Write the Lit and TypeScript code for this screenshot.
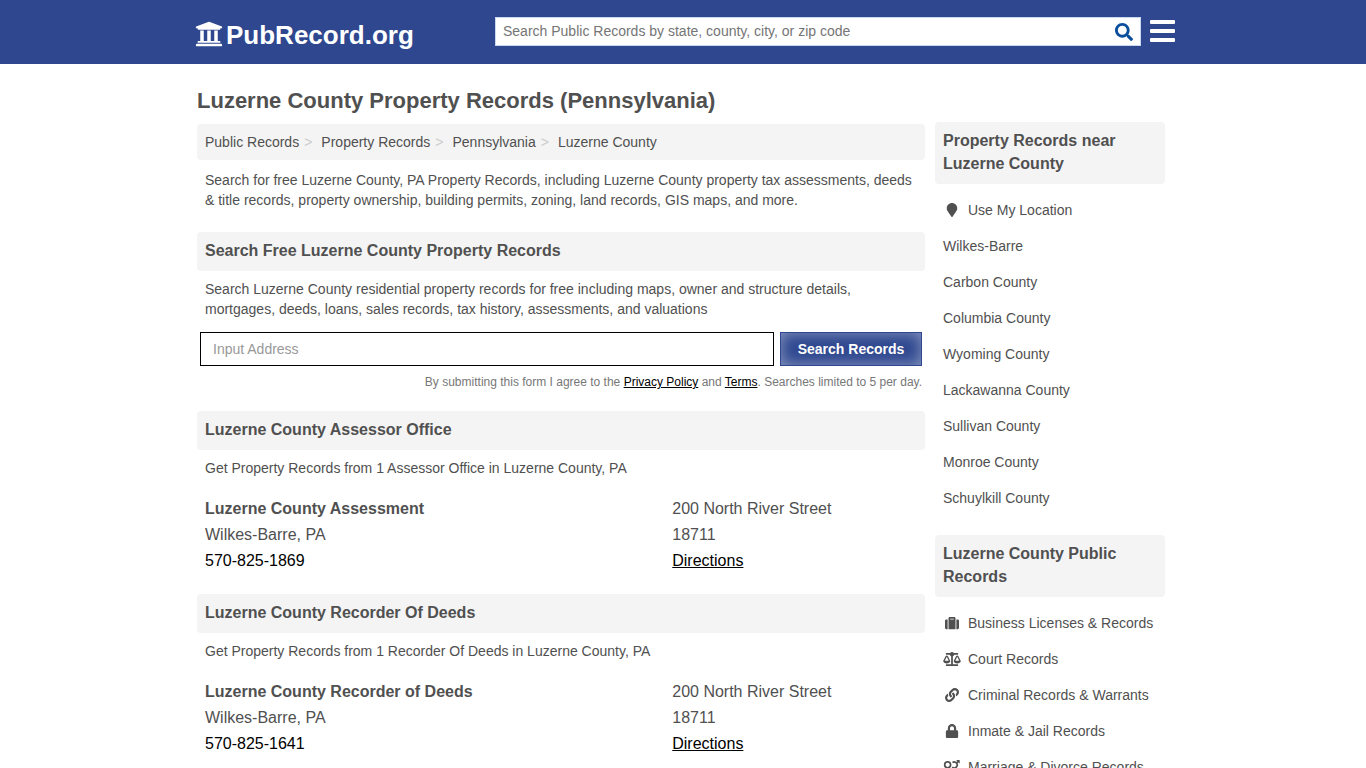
import { LitElement, html, css, svg } from "lit";
import { customElement } from "lit/decorators.js";

const ICONS: Record<string, { box: string; body: unknown }> = {
  university: {
    box: "0 0 512 512",
    body: svg`<path d="M496 128v16a8 8 0 0 1-8 8h-24v12c0 6.627-5.373 12-12 12H60c-6.627 0-12-5.373-12-12v-12H24a8 8 0 0 1-8-8v-16a8 8 0 0 1 4.941-7.392l232-88a7.996 7.996 0 0 1 6.118 0l232 88A8 8 0 0 1 496 128zm-24 304H40c-13.255 0-24 10.745-24 24v16a8 8 0 0 0 8 8h464a8 8 0 0 0 8-8v-16c0-13.255-10.745-24-24-24zM96 192v192H60c-6.627 0-12 5.373-12 12v20h416v-20c0-6.627-5.373-12-12-12h-36V192h-64v192h-64V192h-64v192h-64V192H96z"/>`,
  },
  search: {
    box: "0 0 512 512",
    body: svg`<path d="M505 442.7L405.3 343c-4.5-4.5-10.6-7-17-7H372c27.6-35.3 44-79.7 44-128C416 93.1 322.9 0 208 0S0 93.1 0 208s93.1 208 208 208c48.3 0 92.7-16.4 128-44v16.3c0 6.4 2.5 12.5 7 17l99.7 99.7c9.4 9.4 24.6 9.4 33.9 0l28.3-28.3c9.4-9.4 9.4-24.6.1-34zM208 336c-70.7 0-128-57.2-128-128 0-70.7 57.2-128 128-128 70.7 0 128 57.2 128 128 0 70.7-57.2 128-128 128z"/>`,
  },
  marker: {
    box: "0 0 384 512",
    body: svg`<path d="M172.268 501.67C26.97 291.031 0 269.413 0 192 0 85.961 85.961 0 192 0s192 85.961 192 192c0 77.413-26.97 99.031-172.268 309.67-9.535 13.774-29.93 13.773-39.464 0z"/>`,
  },
  suitcase: {
    box: "0 0 512 512",
    body: svg`<path d="M128 480h256V80c0-26.5-21.5-48-48-48H176c-26.5 0-48 21.5-48 48v400zm64-384h128v32H192V96zm320 80v256c0 26.5-21.5 48-48 48h-48V128h48c26.5 0 48 21.5 48 48zM96 480H48c-26.5 0-48-21.5-48-48V176c0-26.5 21.5-48 48-48h48v352z"/>`,
  },
  scale: {
    box: "0 0 640 512",
    body: svg`<path d="M256 336h-.02c0-16.18 1.34-8.73-85.05-181.51-17.65-35.29-68.19-35.36-85.87 0C-2.06 328.75.02 320.33.02 336H0c0 44.18 57.31 80 128 80s128-35.82 128-80zM128 176l72 144H56l72-144zm511.98 160c0-16.18 1.34-8.73-85.05-181.51-17.65-35.29-68.19-35.36-85.87 0-87.12 174.26-85.04 165.84-85.04 181.51H384c0 44.18 57.31 80 128 80s128-35.82 128-80h-.02zM440 320l72-144 72 144H440zm88 128H352V153.25c23.51-10.29 41.16-31.48 46.39-57.25H528c8.84 0 16-7.16 16-16V48c0-8.84-7.16-16-16-16H383.64C369.04 12.68 346.09 0 320 0s-49.04 12.68-63.64 32H112c-8.84 0-16 7.16-16 16v32c0 8.84 7.16 16 16 16h129.61c5.23 25.76 22.87 46.96 46.39 57.25V448H112c-8.84 0-16 7.16-16 16v32c0 8.84 7.16 16 16 16h416c8.84 0 16-7.16 16-16v-32c0-8.84-7.16-16-16-16z"/>`,
  },
  link: {
    box: "0 0 512 512",
    body: svg`<path d="M326.612 185.391c59.747 59.809 58.927 155.698.36 214.59-.11.12-.24.25-.36.37l-67.2 67.2c-59.27 59.27-155.699 59.262-214.96 0-59.27-59.26-59.27-155.7 0-214.96l37.106-37.106c9.84-9.84 26.786-3.3 27.294 10.606.648 17.722 3.826 35.527 9.69 52.721 1.986 5.822.567 12.262-3.783 16.612l-13.087 13.087c-28.026 28.026-28.905 73.66-1.155 101.96 28.024 28.579 74.086 28.749 102.325.51l67.2-67.19c28.191-28.191 28.073-73.757 0-101.83-3.701-3.694-7.429-6.564-10.341-8.569a16.037 16.037 0 0 1-6.947-12.606c-.396-10.567 3.348-21.456 11.698-29.806l21.054-21.055c5.521-5.521 14.182-6.199 20.584-1.731a152.482 152.482 0 0 1 20.522 17.197zM467.547 44.449c-59.261-59.262-155.69-59.27-214.96 0l-67.2 67.2c-.12.12-.25.25-.36.37-58.566 58.892-59.387 154.781.36 214.59a152.454 152.454 0 0 0 20.521 17.196c6.402 4.468 15.064 3.789 20.584-1.731l21.054-21.055c8.35-8.35 12.094-19.239 11.698-29.806a16.037 16.037 0 0 0-6.947-12.606c-2.912-2.005-6.64-4.875-10.341-8.569-28.073-28.073-28.191-73.639 0-101.83l67.2-67.19c28.239-28.239 74.3-28.069 102.325.51 27.75 28.3 26.872 73.934-1.155 101.96l-13.087 13.087c-4.35 4.35-5.769 10.79-3.783 16.612 5.864 17.194 9.042 34.999 9.69 52.721.509 13.906 17.454 20.446 27.294 10.606l37.106-37.106c59.271-59.259 59.271-155.699.001-214.959z"/>`,
  },
  lock: {
    box: "0 0 448 512",
    body: svg`<path d="M400 224h-24v-72C376 68.2 307.8 0 224 0S72 68.2 72 152v72H48c-26.5 0-48 21.5-48 48v192c0 26.5 21.5 48 48 48h352c26.5 0 48-21.5 48-48V272c0-26.5-21.5-48-48-48zm-104 0H152v-72c0-39.7 32.3-72 72-72s72 32.3 72 72v72z"/>`,
  },
  couple: {
    box: "0 0 640 512",
    body: svg`<g fill="none" stroke="currentColor" stroke-width="62"><circle cx="160" cy="176" r="108"/><path d="M160 284V500M84 400H236"/><path d="M338 92A108 108 0 1 1 330 262M484 118L560 42"/></g><path fill="currentColor" d="M474 0H588a12 12 0 0 1 12 12V126L560 100L500 40Z"/>`,
  },
};

const icon = (name: string, cls: string) =>
  html`<svg class=${cls} viewBox=${ICONS[name].box} fill="currentColor" aria-hidden="true">${ICONS[name].body}</svg>`;

interface SideLink {
  label: string;
  icon?: string;
}

const NEARBY: SideLink[] = [
  { label: "Use My Location", icon: "marker" },
  { label: "Wilkes-Barre" },
  { label: "Carbon County" },
  { label: "Columbia County" },
  { label: "Wyoming County" },
  { label: "Lackawanna County" },
  { label: "Sullivan County" },
  { label: "Monroe County" },
  { label: "Schuylkill County" },
];

const RECORDS: SideLink[] = [
  { label: "Business Licenses & Records", icon: "suitcase" },
  { label: "Court Records", icon: "scale" },
  { label: "Criminal Records & Warrants", icon: "link" },
  { label: "Inmate & Jail Records", icon: "lock" },
  { label: "Marriage & Divorce Records", icon: "couple" },
];

const CRUMBS = ["Public Records", "Property Records", "Pennsylvania", "Luzerne County"];

const OFFICES = [
  {
    heading: "Luzerne County Assessor Office",
    intro: "Get Property Records from 1 Assessor Office in Luzerne County, PA",
    name: "Luzerne County Assessment",
    city: "Wilkes-Barre, PA",
    phone: "570-825-1869",
    street: "200 North River Street",
    zip: "18711",
  },
  {
    heading: "Luzerne County Recorder Of Deeds",
    intro: "Get Property Records from 1 Recorder Of Deeds in Luzerne County, PA",
    name: "Luzerne County Recorder of Deeds",
    city: "Wilkes-Barre, PA",
    phone: "570-825-1641",
    street: "200 North River Street",
    zip: "18711",
  },
];

@customElement("app-root")
export class AppRoot extends LitElement {
  static styles = css`
    :host {
      display: block;
      background: #fff;
      color: #505050;
      font: 14px/20px "Liberation Sans", Arial, sans-serif;
    }
    *,
    *::before {
      box-sizing: border-box;
    }
    h1,
    h2,
    p,
    ul,
    ol {
      margin: 0;
      padding: 0;
    }
    ul,
    ol {
      list-style: none;
    }
    a {
      color: inherit;
      text-decoration: none;
    }
    input,
    button {
      font: inherit;
      margin: 0;
      border-radius: 0;
    }
    .header {
      background: #2e478f;
    }
    .bar {
      display: flex;
      align-items: center;
      max-width: 984px;
      height: 64px;
      margin: 0 auto;
      padding: 0 0 2px 4px;
    }
    .logo {
      display: flex;
      align-items: center;
      gap: 3px;
      width: 300px;
      color: #fff;
      font-size: 26px;
      line-height: 30px;
      font-weight: bold;
      padding-top: 6px;
    }
    .logo-name {
      padding-top: 2px;
    }
    .logo-icon {
      width: 28px;
      height: 28px;
    }
    .site-search {
      flex: 1;
      display: flex;
      align-items: center;
      height: 29px;
      background: #fff;
      border: 1px solid #c9d8ef;
    }
    .site-input {
      flex: 1;
      min-width: 0;
      height: 27px;
      padding: 0 7px;
      border: 0;
      background: transparent;
      color: #505050;
    }
    .site-input::placeholder {
      color: #757575;
    }
    .site-go {
      display: flex;
      padding: 2px 7px 0;
      border: 0;
      background: none;
      color: #0b4f9c;
    }
    .go-icon {
      width: 18px;
      height: 18px;
    }
    .menu {
      display: grid;
      gap: 5px;
      width: 25px;
      margin-left: 9px;
      padding: 0;
      border: 0;
      background: none;
    }
    .menu-line {
      height: 4px;
      border-radius: 1px;
      background: #fff;
    }
    .page {
      display: grid;
      grid-template-columns: minmax(0, 1fr) 230px;
      gap: 10px;
      max-width: 976px;
      margin: 0 auto;
      padding: 22px 6px 0 2px;
    }
    .title {
      font-size: 22px;
      line-height: 30px;
      margin-bottom: 8px;
    }
    .crumbs {
      display: flex;
      padding: 8px;
      background: #f4f4f4;
      border-radius: 4px;
    }
    .crumb + .crumb::before {
      content: ">";
      padding: 0 9px 0 5px;
      color: #ccc;
    }
    .text {
      padding: 0 8px;
      margin: 10px 0 22px;
    }
    .heading {
      padding: 7px 8px 9px;
      border-radius: 4px;
      background: #f4f4f4;
      font-size: 16px;
      line-height: 23px;
    }
    .lead {
      padding: 0 8px;
      margin: 8px 0 13px;
    }
    .lookup {
      padding: 0 3px;
      margin-bottom: 20px;
    }
    .lookup-row {
      display: flex;
      gap: 6px;
      height: 34px;
    }
    .address {
      flex: 1;
      min-width: 0;
      padding: 0 12px;
      border: 1px solid #000;
      background: #fff;
      color: #505050;
    }
    .address::placeholder {
      color: #999;
    }
    .submit {
      width: 142px;
      padding: 0;
      border: 1px solid #2e478f;
      background: #2e478f;
      box-shadow: inset 0 0 15px rgba(255, 255, 255, 0.45);
      color: #fff;
      font-weight: bold;
    }
    .terms {
      margin-top: 7px;
      color: #777;
      font-size: 12px;
      line-height: 18px;
      text-align: right;
    }
    .dark {
      color: #000;
    }
    .underlined {
      color: #000;
      text-decoration: underline;
    }
    .intro {
      padding: 0 8px;
      margin: 8px 0 18px;
    }
    .office {
      display: grid;
      grid-template-columns: 21fr 11fr;
      padding: 0 8px;
      margin-bottom: 20px;
      font-size: 16px;
      line-height: 26px;
    }
    .side {
      padding-top: 36px;
    }
    .side-list {
      margin: 8px 0 19px;
    }
    .side-link {
      display: flex;
      align-items: center;
      gap: 7px;
      padding: 8px;
    }
    .side-icon {
      width: 18px;
      height: 14px;
    }
  `;

  private sideList(title: string, links: SideLink[]) {
    return html`
      <h2 class="heading">${title}</h2>
      <ul class="side-list">
        ${links.map(
          (l) => html`<li>
            <a class="side-link" href="#">${l.icon ? icon(l.icon, "side-icon") : null}<span>${l.label}</span></a>
          </li>`
        )}
      </ul>
    `;
  }

  render() {
    return html`
      <header class="header">
        <div class="bar">
          <a class="logo" href="#">${icon("university", "logo-icon")}<span class="logo-name">PubRecord.org</span></a>
          <form class="site-search" role="search">
            <input
              class="site-input"
              type="text"
              aria-label="Search Public Records"
              placeholder="Search Public Records by state, county, city, or zip code"
            />
            <button class="site-go" type="button" aria-label="Search">${icon("search", "go-icon")}</button>
          </form>
          <button class="menu" type="button" aria-label="Menu">
            <span class="menu-line"></span><span class="menu-line"></span><span class="menu-line"></span>
          </button>
        </div>
      </header>
      <div class="page">
        <main>
          <h1 class="title">Luzerne County Property Records (Pennsylvania)</h1>
          <nav aria-label="Breadcrumb">
            <ol class="crumbs">
              ${CRUMBS.map((c) => html`<li class="crumb"><a href="#">${c}</a></li>`)}
            </ol>
          </nav>
          <p class="text">
            Search for free Luzerne County, PA Property Records, including Luzerne County property tax assessments,
            deeds &amp; title records, property ownership, building permits, zoning, land records, GIS maps, and more.
          </p>
          <h2 class="heading">Search Free Luzerne County Property Records</h2>
          <p class="lead">
            Search Luzerne County residential property records for free including maps, owner and structure details,
            mortgages, deeds, loans, sales records, tax history, assessments, and valuations
          </p>
          <form class="lookup">
            <div class="lookup-row">
              <input class="address" type="text" aria-label="Input Address" placeholder="Input Address" />
              <button class="submit" type="button">Search Records</button>
            </div>
            <p class="terms">
              By submitting this form I agree to the <a class="underlined" href="#">Privacy Policy</a> and
              <a class="underlined" href="#">Terms</a>. Searches limited to 5 per day.
            </p>
          </form>
          ${OFFICES.map(
            (o) => html`
              <section>
                <h2 class="heading">${o.heading}</h2>
                <p class="intro">${o.intro}</p>
                <div class="office">
                  <div>
                    <strong>${o.name}</strong>
                    <div>${o.city}</div>
                    <a class="dark" href="#">${o.phone}</a>
                  </div>
                  <div>
                    <div>${o.street}</div>
                    <div>${o.zip}</div>
                    <a class="underlined" href="#">Directions</a>
                  </div>
                </div>
              </section>
            `
          )}
        </main>
        <aside class="side">
          ${this.sideList("Property Records near Luzerne County", NEARBY)}
          ${this.sideList("Luzerne County Public Records", RECORDS)}
        </aside>
      </div>
    `;
  }
}
